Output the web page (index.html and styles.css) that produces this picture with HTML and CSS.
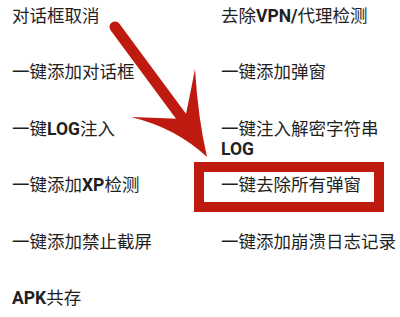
FILE: index.html
```html
<!DOCTYPE html>
<html lang="zh-CN">
<head>
<meta charset="utf-8">
<title>功能列表</title>
<link rel="stylesheet" href="styles.css">
</head>
<body>
<div class="page">
  <ul class="grid">
    <li>对话框取消</li>
    <li>去除<span class="lat">VPN/</span>代理检测</li>
    <li>一键添加对话框</li>
    <li>一键添加弹窗</li>
    <li>一键<span class="lat">LOG</span>注入</li>
    <li>一键注入解密字符串<span class="lat">LOG</span></li>
    <li>一键添加<span class="lat">XP</span>检测</li>
    <li>一键去除所有弹窗</li>
    <li>一键添加禁止截屏</li>
    <li>一键添加崩溃日志记录</li>
    <li><span class="lat">APK</span>共存</li>
    <li></li>
  </ul>
  <div class="highlight"></div>
  <svg class="arrow" width="400" height="317" viewBox="0 0 400 317" xmlns="http://www.w3.org/2000/svg">
    <line x1="115" y1="27" x2="186" y2="123" stroke="#be1a0f" stroke-width="11" stroke-linecap="round"/>
    <path d="M207,157 Q176,128 131,117 L185,119 Q190,95 195,69 Q198,118 207,157 Z" fill="#be1a0f"/>
  </svg>
</div>
</body>
</html>
```

FILE: styles.css
```css
html, body {
  margin: 0;
  padding: 0;
  background: #ffffff;
}

.page {
  position: relative;
  width: 400px;
  height: 317px;
  overflow: hidden;
}

.grid {
  list-style: none;
  margin: 0;
  padding: 5px 0 0 12px;
  display: grid;
  grid-template-columns: 209px 1fr;
  grid-auto-rows: 56.4px;
  align-items: start;
  font-family: "Noto Sans CJK SC", "Noto Sans", sans-serif;
  font-size: 17.5px;
  line-height: 20px;
  color: #1f1f1f;
}

.grid li {
  margin: 0;
  padding: 0;
}

.lat {
  font-family: Roboto, "Noto Sans", sans-serif;
  font-weight: 700;
}

.highlight {
  position: absolute;
  left: 194px;
  top: 162px;
  width: 190px;
  height: 50px;
  box-sizing: border-box;
  border: 10px solid #be1a0f;
}

.arrow {
  position: absolute;
  left: 0;
  top: 0;
}
```
